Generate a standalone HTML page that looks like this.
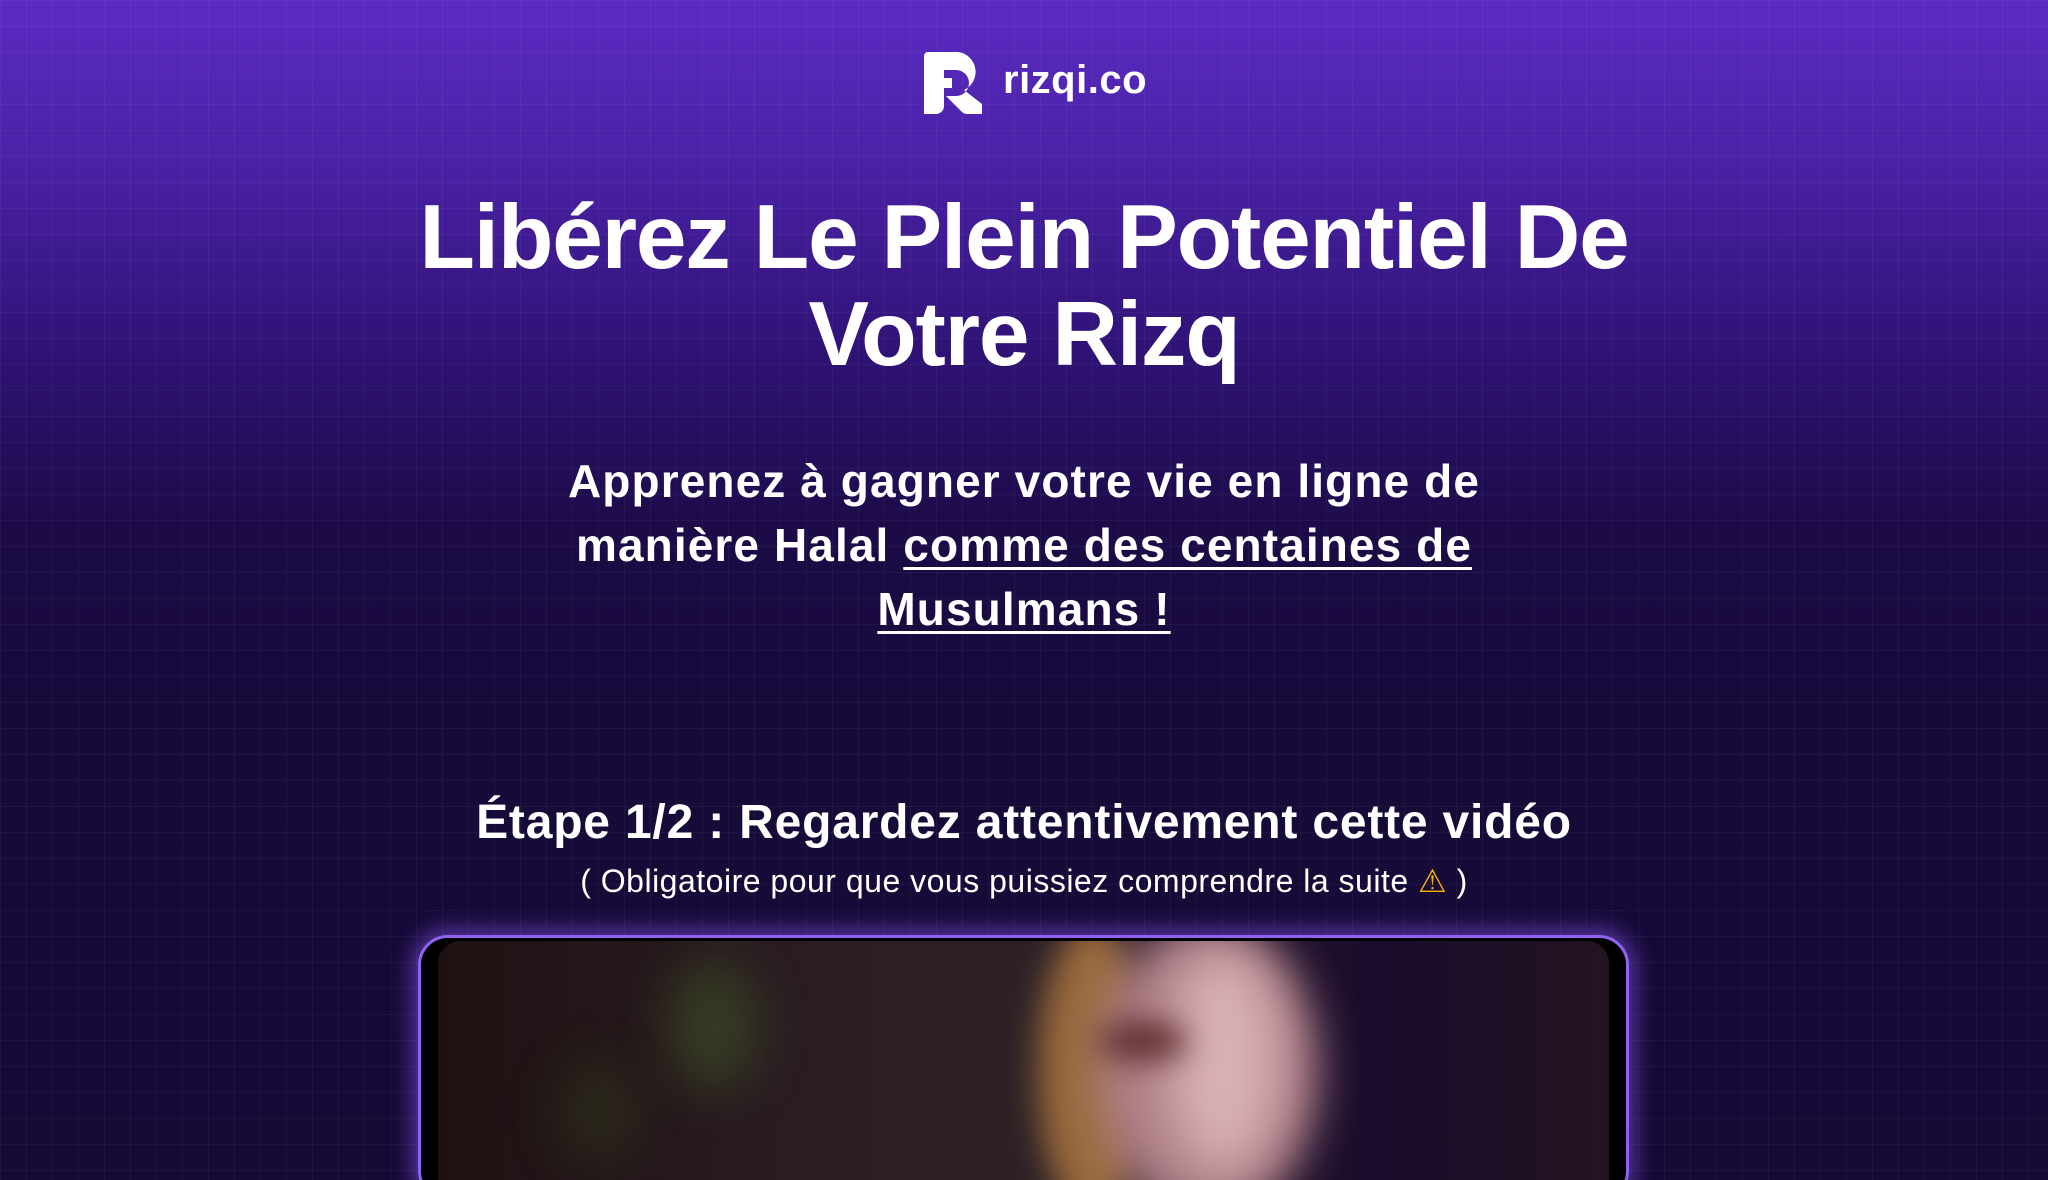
<!DOCTYPE html>
<html><head><meta charset="utf-8"><style>
html,body{margin:0;padding:0;width:2048px;height:1180px;overflow:hidden}
html{background:#150936}
body{position:relative;font-family:"Liberation Sans",sans-serif;color:#fff;
background:linear-gradient(180deg,#5a2bc2 0%,#4a21a6 14%,#2f1275 30%,#1c0b47 45%,#170a3a 60%,#150936 100%);}
.grid{position:absolute;inset:0;background-image:linear-gradient(rgba(255,255,255,.04) 1px,transparent 1px),linear-gradient(90deg,rgba(255,255,255,.04) 1px,transparent 1px);background-size:26px 26px;}
.c{position:absolute;left:0;width:2048px;text-align:center}
h1{margin:0;font-size:91px;line-height:97px;font-weight:700;letter-spacing:-1.2px}
.sub{font-size:46px;line-height:64px;font-weight:700;letter-spacing:1.1px}
.sub u{text-decoration-thickness:3px;text-underline-offset:6px}
.frame{position:absolute;left:418px;top:935px;width:1205px;height:260px;border:3px solid #8f62f0;border-radius:30px;background:#000;box-shadow:0 0 22px 6px rgba(140,90,240,.55);overflow:hidden}
.vid{position:absolute;left:17px;right:17px;top:3px;bottom:0;border-radius:22px 22px 0 0;overflow:hidden;
background:linear-gradient(90deg,#1e1112 0%,#2a1d22 30%,#2d2126 50%,#2a1a2c 62%,#1a0c2c 80%,#22141f 100%);}
.b{position:absolute;filter:blur(18px);border-radius:50%}
</style></head><body>
<div class="grid"></div>
<svg style="position:absolute;left:924px;top:52px" width="58" height="62" viewBox="0 0 58 62">
<path d="M4 0 H34 A20 20 0 0 1 40 38 L58 52 V62 H44 A8 8 0 0 1 38 60 L22 44 H32 A10 10 0 0 0 32 18 H20 V26 H28 V36 H20 V54 A8 8 0 0 1 12 62 H0 V4 A4 4 0 0 1 4 0 Z" fill="#fff"/>
</svg>
<div style="position:absolute;left:1003px;top:58px;font-size:40px;font-weight:700;letter-spacing:0.5px">rizqi.co</div>
<div class="c" style="top:189px"><h1>Libérez Le Plein Potentiel De<br>Votre Rizq</h1></div>
<div class="c sub" style="top:449px">Apprenez à gagner votre vie en ligne de<br>manière Halal <u>comme des centaines de</u><br><u>Musulmans !</u></div>
<div class="c" style="top:795px;font-size:48px;font-weight:700;letter-spacing:0.8px">Étape 1/2 : Regardez attentivement cette vidéo</div>
<div class="c" style="top:862px;font-size:32px;letter-spacing:0.5px">( Obligatoire pour que vous puissiez comprendre la suite <span style="color:#f5b301">⚠</span> )</div>
<div class="frame"><div class="vid">
<div class="b" style="left:230px;top:20px;width:90px;height:130px;background:rgba(70,100,40,.45);filter:blur(24px)"></div>
<div class="b" style="left:120px;top:120px;width:80px;height:100px;background:rgba(60,80,30,.3);filter:blur(24px)"></div>
<div class="b" style="left:600px;top:-20px;width:110px;height:300px;background:#9a6a3c;filter:blur(16px)"></div>
<div class="b" style="left:660px;top:-20px;width:220px;height:300px;background:#b08088;filter:blur(22px)"></div>
<div class="b" style="left:730px;top:10px;width:110px;height:220px;background:#d8b0b4;filter:blur(24px)"></div>
<div class="b" style="left:660px;top:80px;width:90px;height:40px;background:#5b2a2c;filter:blur(16px)"></div>
</div></div>
</body></html>
